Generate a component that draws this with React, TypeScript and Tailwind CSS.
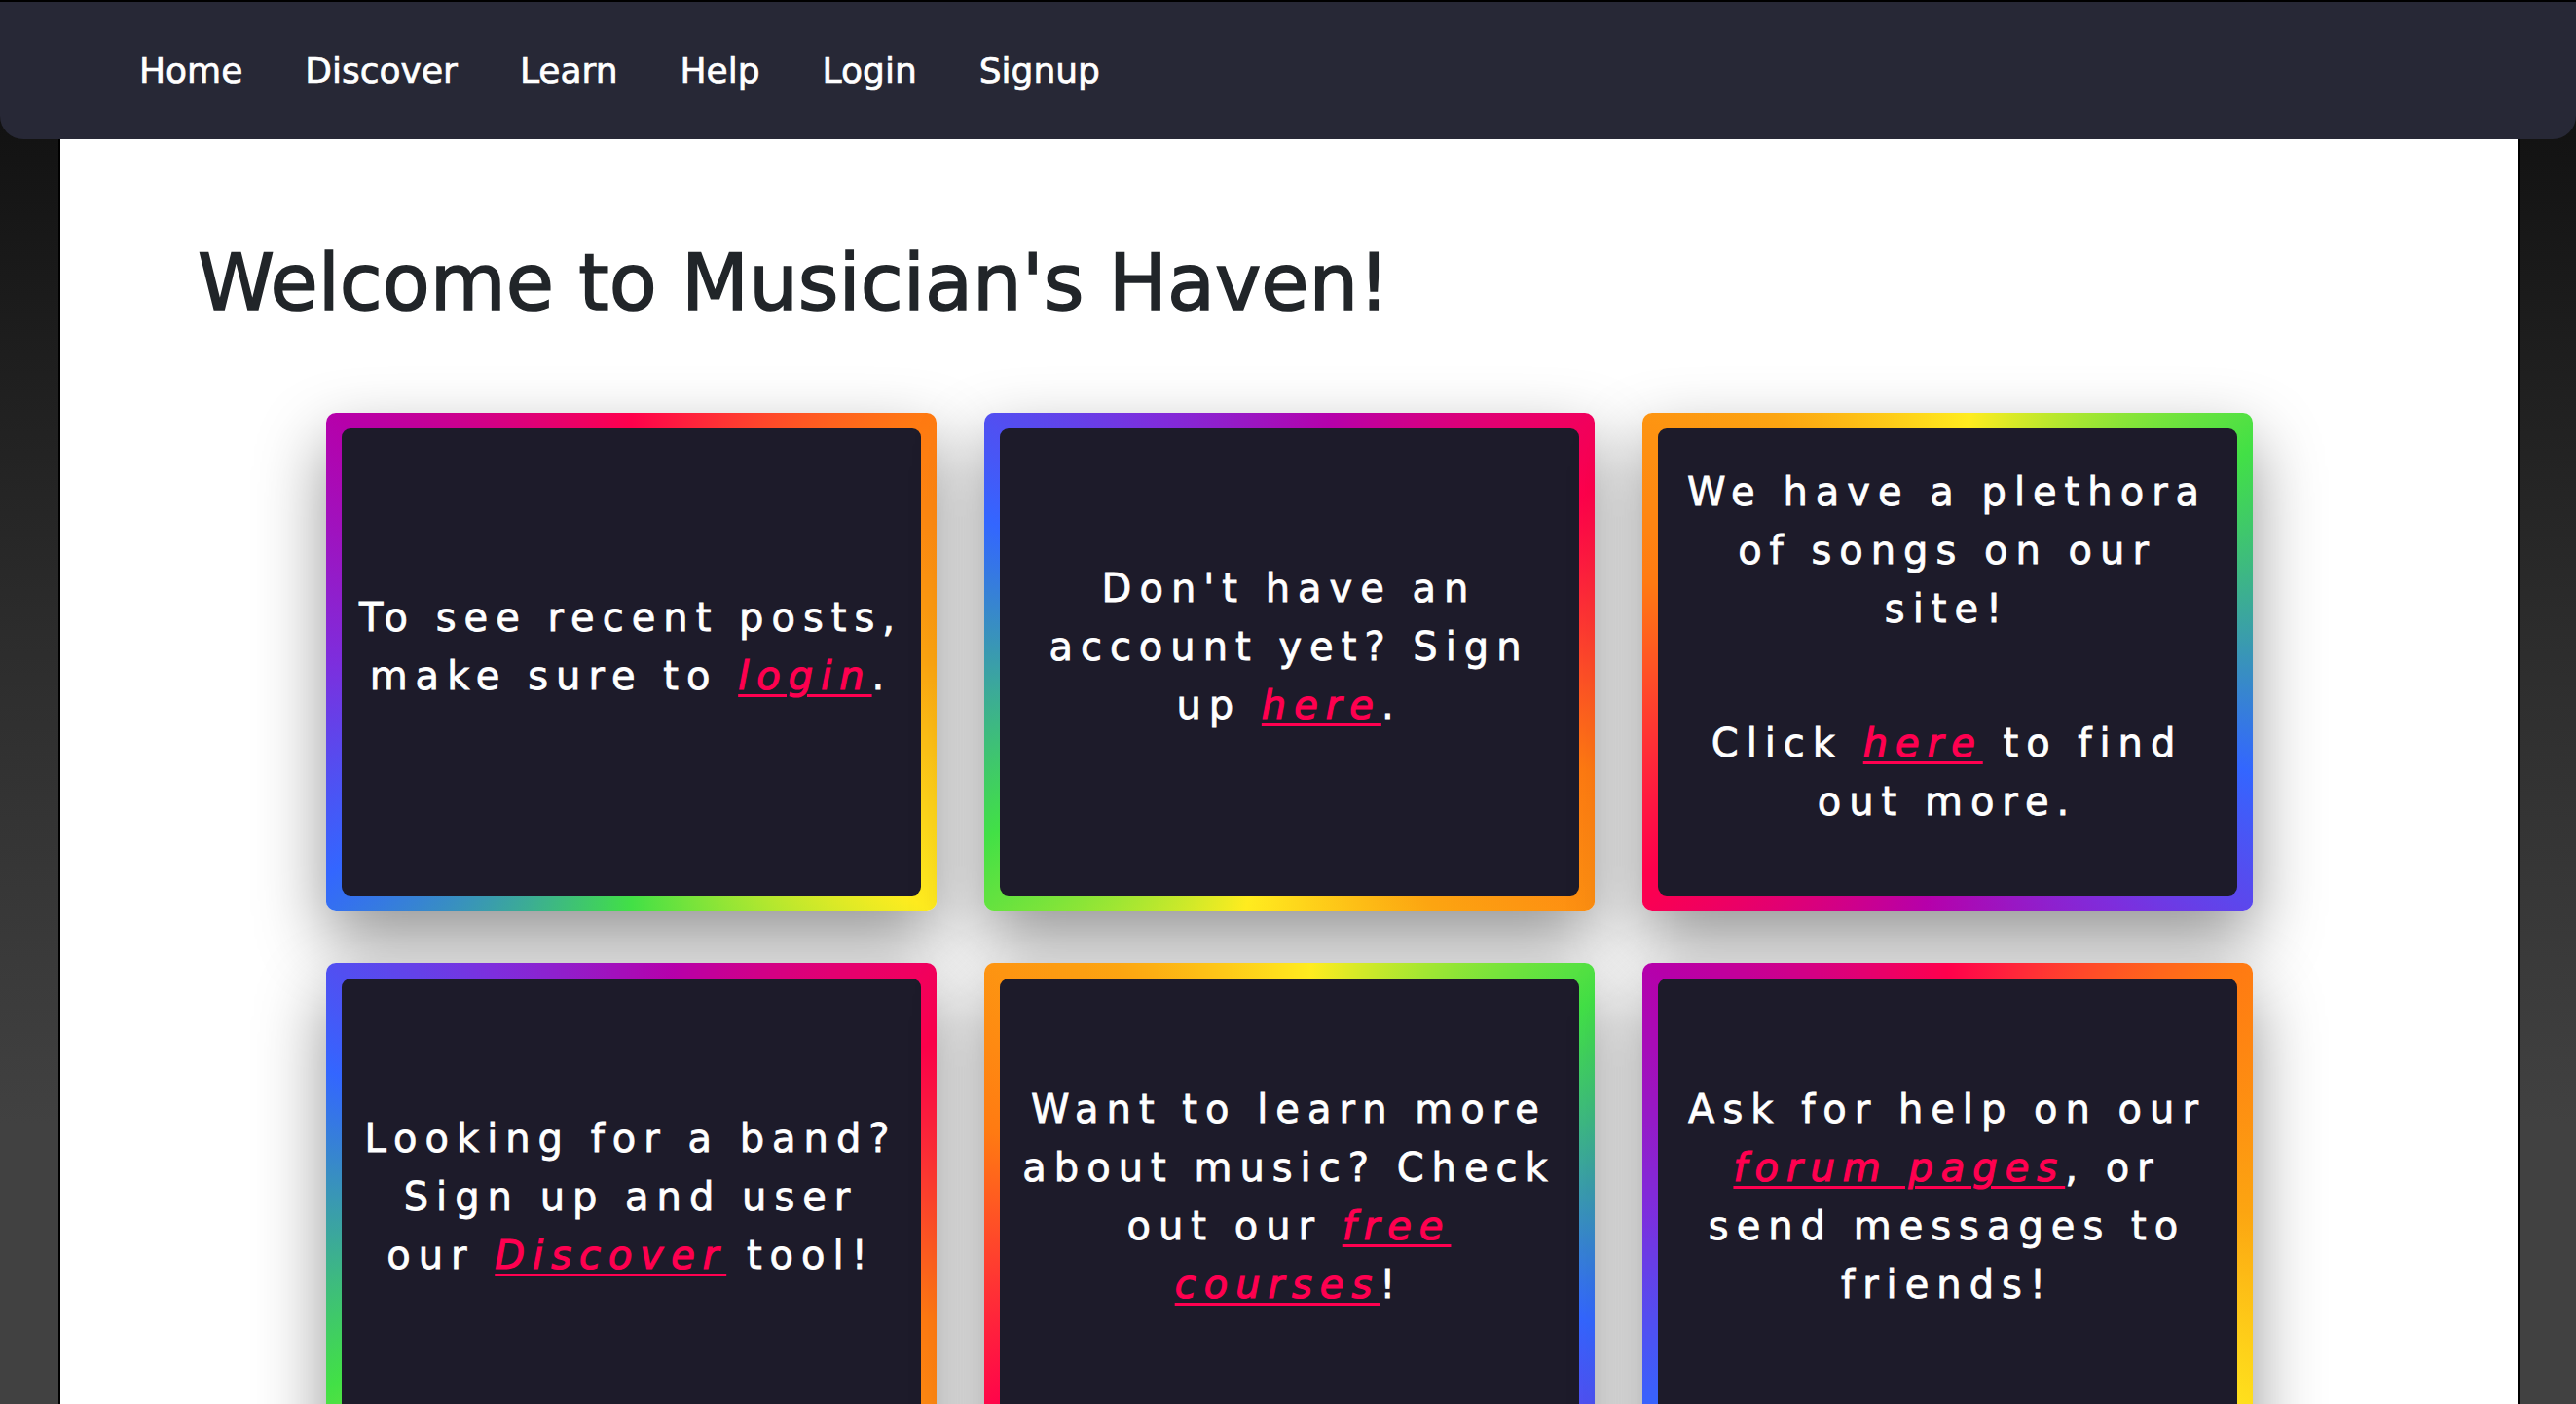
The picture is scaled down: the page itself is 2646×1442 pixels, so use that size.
import type { ReactNode } from "react";

const navLinks = ["Home", "Discover", "Learn", "Help", "Login", "Signup"];

// rainbow ring, rotated differently per card
const ringA =
  "bg-[conic-gradient(from_0deg,#ff004c,#ff7a12_50deg,#fca511_90deg,#ffec1f_130deg,#42e046_180deg,#3366ff_235deg,#7d2edd_270deg,#b600aa_310deg,#ff004c_360deg)]";
const ringB =
  "bg-[conic-gradient(from_60deg,#ff004c,#ff7a12_50deg,#fca511_90deg,#ffec1f_130deg,#42e046_180deg,#3366ff_235deg,#7d2edd_270deg,#b600aa_310deg,#ff004c_360deg)]";
const ringC =
  "bg-[conic-gradient(from_235deg,#ff004c,#ff7a12_50deg,#fca511_90deg,#ffec1f_130deg,#42e046_180deg,#3366ff_235deg,#7d2edd_270deg,#b600aa_310deg,#ff004c_360deg)]";

const Hot = ({ children }: { children: ReactNode }) => (
  <a
    href="#"
    className="italic text-[#ff0050] underline decoration-[3px] underline-offset-[5px] [-webkit-text-stroke:1.2px_#ff0050]"
  >
    {children}
  </a>
);

const Card = ({ ring, children }: { ring: string; children: ReactNode }) => (
  <div
    className={`${ring} rounded-[10px] p-[16px] shadow-[0_30px_70px_rgba(0,0,0,0.42)]`}
  >
    <div className="flex h-[480px] flex-col items-center justify-center rounded-[9px] bg-[#1d1b2a] px-2 text-center text-[40px] leading-[60px] tracking-[8px] text-white [-webkit-text-stroke:0.8px_white]">
      {children}
    </div>
  </div>
);

export default function App() {
  return (
    <div className="flex h-screen flex-col overflow-hidden bg-[linear-gradient(to_bottom,#0c0c0c,#2c2c2c_45%,#414141_80%,#414141)] font-['DejaVu_Sans',sans-serif]">
      <nav className="flex h-[143px] shrink-0 items-center gap-[64px] rounded-b-[24px] border-t-2 border-black bg-[#272836] pl-[143px] text-[36px] text-white [-webkit-text-stroke:0.7px_white]">
        {navLinks.map((l) => (
          <a key={l} href="#">
            {l}
          </a>
        ))}
      </nav>

      <main className="ml-[60px] mr-[58px] flex-1 border-x-2 border-black bg-white px-[141px] pt-[100px]">
        <h1 className="text-[80px] leading-[96px] text-[#212529] [-webkit-text-stroke:1.6px_#212529]">
          Welcome to Musician's Haven!
        </h1>

        <div className="mt-[85px] grid grid-cols-[repeat(3,627px)] justify-center gap-x-[49px] gap-y-[53px]">
          <Card ring={ringA}>
            <p className="mb-[32px]">
              To see recent posts,
              <br />
              make sure to <Hot>login</Hot>.
            </p>
          </Card>

          <Card ring={ringB}>
            <p className="mb-[32px]">
              Don't have an
              <br />
              account yet? Sign
              <br />
              up <Hot>here</Hot>.
            </p>
          </Card>

          <Card ring={ringC}>
            <p className="mb-[78px]">
              We have a plethora
              <br />
              of songs on our
              <br />
              site!
            </p>
            <p className="mb-[32px]">
              Click <Hot>here</Hot> to find
              <br />
              out more.
            </p>
          </Card>

          <Card ring={ringB}>
            <p className="mb-[32px]">
              Looking for a band?
              <br />
              Sign up and user
              <br />
              our <Hot>Discover</Hot> tool!
            </p>
          </Card>

          <Card ring={ringC}>
            <p className="mb-[32px]">
              Want to learn more
              <br />
              about music? Check
              <br />
              out our{" "}
              <Hot>
                free
                <br />
                courses
              </Hot>
              !
            </p>
          </Card>

          <Card ring={ringA}>
            <p className="mb-[32px]">
              Ask for help on our
              <br />
              <Hot>forum pages</Hot>, or
              <br />
              send messages to
              <br />
              friends!
            </p>
          </Card>
        </div>
      </main>
    </div>
  );
}
